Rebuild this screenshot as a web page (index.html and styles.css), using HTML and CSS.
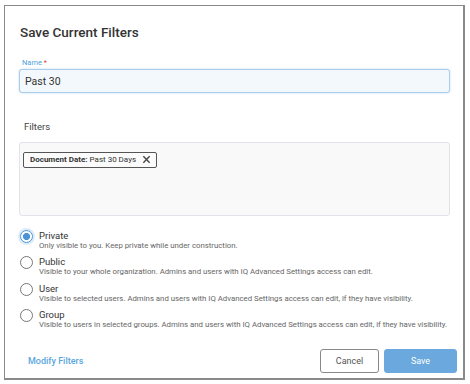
FILE: index.html
```html
<!DOCTYPE html>
<html lang="en">
<head>
  <meta charset="UTF-8" />
  <title>Save Current Filters</title>
  <link rel="stylesheet" href="styles.css">
</head>
<body>
  <div class="dialog">
    <h1 class="dialog-title">Save Current Filters</h1>

    <div class="field">
      <label for="nameInput" class="field-label">Name <span class="req">*</span></label>
      <input type="text" id="nameInput" class="text-input" value="Past 30" />
    </div>

    <div class="filters">
      <div class="section-label">Filters</div>
      <div class="filter-box">
        <span class="chip">
          <b>Document Date:</b>&nbsp;Past 30 Days
          <svg class="chip-x" width="9" height="9" viewBox="0 0 10 10">
            <path d="M1.5 1.5 L8.5 8.5 M8.5 1.5 L1.5 8.5" stroke="#444" stroke-width="1.5" fill="none" />
          </svg>
        </span>
      </div>
    </div>

    <div class="options">
      <label class="option">
        <span class="radio checked"></span>
        <span class="option-text">
          <span class="option-name">Private</span>
          <span class="option-desc">Only visible to you. Keep private while under construction.</span>
        </span>
      </label>
      <label class="option">
        <span class="radio"></span>
        <span class="option-text">
          <span class="option-name">Public</span>
          <span class="option-desc">Visible to your whole organization. Admins and users with IQ Advanced Settings access can edit.</span>
        </span>
      </label>
      <label class="option">
        <span class="radio"></span>
        <span class="option-text">
          <span class="option-name">User</span>
          <span class="option-desc">Visible to selected users. Admins and users with IQ Advanced Settings access can edit, if they have visibility.</span>
        </span>
      </label>
      <label class="option">
        <span class="radio"></span>
        <span class="option-text">
          <span class="option-name">Group</span>
          <span class="option-desc">Visible to users in selected groups. Admins and users with IQ Advanced Settings access can edit, if they have visibility.</span>
        </span>
      </label>
    </div>

    <div class="footer">
      <a class="link" href="#">Modify Filters</a>
      <div class="actions">
        <button class="btn btn-cancel">Cancel</button>
        <button class="btn btn-save">Save</button>
      </div>
    </div>
  </div>
</body>
</html>
```

FILE: styles.css
```css
body {
  margin: 0;
  background: #fff;
  font-family: Roboto, "Liberation Sans", Arial, sans-serif;
  color: #333;
}
.dialog {
  box-sizing: border-box;
  margin: 5px 0 0 4px;
  width: 461px;
  height: 375px;
  border: 1px solid #8a8a8a;
  border-right: 2px solid #8a8a8a;
  border-bottom: 2px solid #8a8a8a;
  padding: 0 13px 0 14px;
  display: flex;
  flex-direction: column;
}
.dialog-title {
  margin: 17px 0 0 1px;
  font-size: 13.5px;
  font-weight: 500;
  line-height: 18px;
  color: #333;
}
.field {
  margin-top: 17px;
  display: flex;
  flex-direction: column;
}
.field-label {
  font-size: 7.5px;
  line-height: 9px;
  color: #4f9fdc;
  margin-left: 3px;
}
.req {
  color: #e0453a;
}
.text-input {
  margin-top: 2px;
  height: 24px;
  box-sizing: border-box;
  border: 1px solid #a9cdeb;
  border-radius: 3px;
  background: #f3f8fc;
  box-shadow: 0 0 2px rgba(120, 180, 230, 0.5);
  padding: 0 5px;
  font-family: inherit;
  font-size: 10.5px;
  color: #333;
  outline: none;
}
.filters {
  margin-top: 28px;
}
.section-label {
  font-size: 9.5px;
  line-height: 12px;
  color: #444;
  margin-left: 5px;
}
.filter-box {
  margin-top: 9px;
  box-sizing: border-box;
  height: 74px;
  border: 1px solid #e2e2ea;
  border-radius: 3px;
  background: #f9f9f9;
  padding: 4px 3px;
}
.chip {
  display: inline-flex;
  align-items: center;
  box-sizing: border-box;
  height: 16px;
  padding: 0 5px 0 6px;
  border: 1px solid #555;
  border-radius: 2px;
  background: #fbfbfb;
  font-size: 8px;
  color: #333;
}
.chip b {
  font-weight: 700;
}
.chip-x {
  margin-left: 6px;
}
.options {
  margin-top: 14px;
  display: flex;
  flex-direction: column;
  gap: 5.3px;
}
.option {
  display: flex;
  align-items: flex-start;
  gap: 6px;
}
.radio {
  flex: none;
  box-sizing: border-box;
  width: 13px;
  height: 13px;
  margin: 0 0 0 1px;
  border: 1px solid #777;
  border-radius: 50%;
  background: #fff;
}
.radio.checked {
  border-color: #4d93d6;
  box-shadow: 0 0 0 2px #dcebf8;
  background: radial-gradient(circle, #4d93d6 0 3.3px, #fff 3.8px);
}
.option-text {
  display: flex;
  flex-direction: column;
}
.option-name {
  font-size: 9.5px;
  line-height: 11px;
  color: #333;
}
.option-desc {
  font-size: 7.8px;
  line-height: 10px;
  color: #666;
}
.footer {
  margin-top: auto;
  margin-bottom: 5px;
  margin-right: -7px;
  display: flex;
  align-items: center;
  justify-content: space-between;
}
.link {
  margin-left: 9px;
  font-size: 9px;
  font-weight: 500;
  color: #5aa6e0;
  text-decoration: none;
}
.actions {
  display: flex;
  gap: 5px;
}
.btn {
  height: 24px;
  border-radius: 3px;
  font-family: inherit;
  font-size: 9px;
  cursor: pointer;
}
.btn-cancel {
  width: 59px;
  background: #fff;
  border: 1px solid #888;
  color: #555;
}
.btn-save {
  width: 73px;
  background: #6aa8dd;
  border: 1px solid #6aa8dd;
  color: #fff;
}
```
